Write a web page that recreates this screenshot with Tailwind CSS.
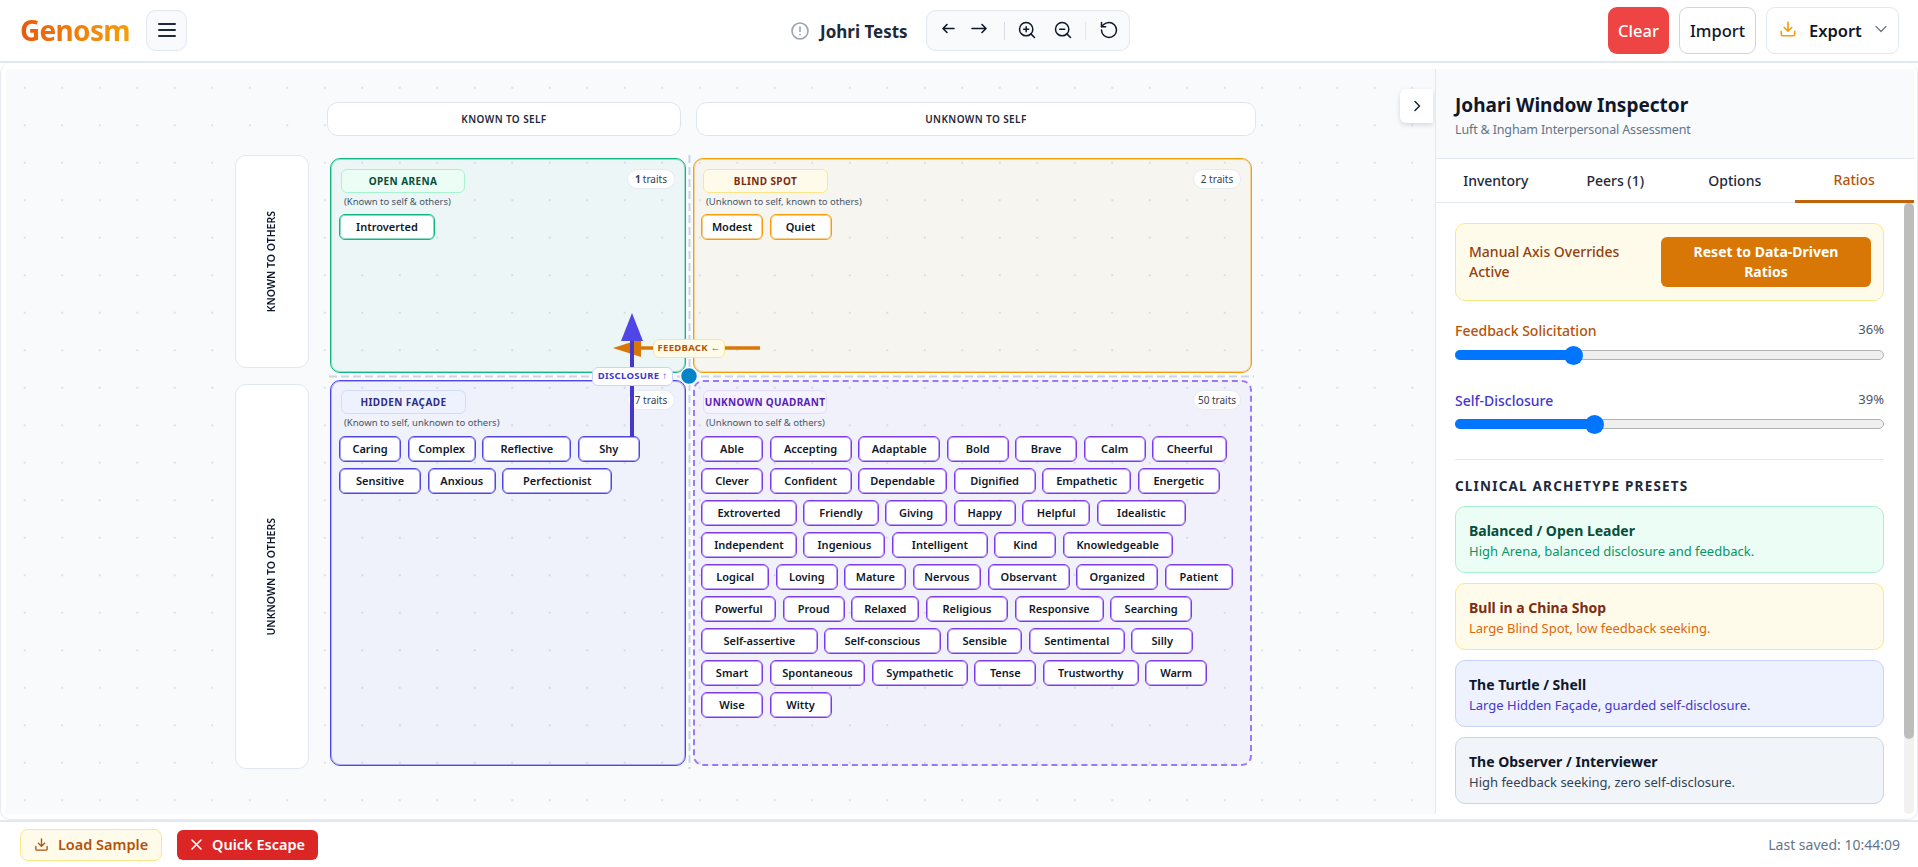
<!DOCTYPE html>
<html lang="en">
<head>
  <meta charset="UTF-8" />
  <meta name="viewport" content="width=device-width, initial-scale=1" />
  <title>Genosm - Johari Window</title>
  <script src="https://cdn.jsdelivr.net/npm/@tailwindcss/browser@4"></script>
</head>
<body class="bg-white font-['Noto_Sans',sans-serif] text-[#0f172a] h-[867px] w-[1918px] overflow-hidden flex flex-col">
  <!-- Header -->
  <header class="h-[63px] shrink-0 border-b-2 border-[#e2e8f0] flex items-center relative">
    <div class="w-[800px] flex items-center pl-[20px] mb-[1px]">
      <span class="w-[126px] text-[28px] font-bold tracking-[-0.7px] leading-[34px] whitespace-nowrap"><span class="bg-linear-to-r from-[#ea580c] to-[#f59e0b] bg-clip-text text-transparent">Genosm</span></span>
      <button class="w-[41px] h-[41px] rounded-[10px] bg-[#f8fafc] border border-[#e2e8f0] flex items-center justify-center">
        <svg width="20" height="20" viewBox="0 0 20 20" fill="none" stroke="#1e293b" stroke-width="2" stroke-linecap="round"><path d="M2 4h16M2 10h16M2 16h16"/></svg>
      </button>
    </div>
    <div class="absolute left-[791px] top-[10px] flex items-center h-[41px]">
      <svg width="18" height="18" viewBox="0 0 18 18" fill="none" stroke="#9ca3af" stroke-width="1.6" stroke-linecap="round"><circle cx="9" cy="9" r="8"/><path d="M9 5v4.5M9 12.6v.2"/></svg>
      <span class="ml-[11px] w-[95px] pt-[2px] text-[17px] font-bold text-[#1e293b] whitespace-nowrap">Johri Tests</span>
      <div class="ml-[11px] w-[204px] h-[41px] rounded-[10px] bg-[#f8fafc] border border-[#e2e8f0] flex items-center text-[#0f172a] relative">
        <svg class="ml-[14px] mb-[4px]" width="14" height="14" viewBox="0 0 14 14" fill="none" stroke="currentColor" stroke-width="1.6" stroke-linecap="round" stroke-linejoin="round"><path d="M13 6.5H2M6 2.5l-4 4 4 4"/></svg>
        <svg class="ml-[16px] mb-[4px]" width="16" height="14" viewBox="0 0 16 14" fill="none" stroke="currentColor" stroke-width="1.6" stroke-linecap="round" stroke-linejoin="round"><path d="M1 6.5h14M11 2.5l4 4-4 4"/></svg>
        <span class="ml-[17px] w-px h-[18px] bg-[#d8dee6]"></span>
        <svg class="ml-[12px] mb-[2px]" width="20" height="20" viewBox="0 0 24 24" fill="none" stroke="currentColor" stroke-width="1.8" stroke-linecap="round"><circle cx="11" cy="11" r="8"/><path d="M21 21l-4.35-4.35M11 8v6M8 11h6"/></svg>
        <svg class="ml-[16px] mb-[2px]" width="20" height="20" viewBox="0 0 24 24" fill="none" stroke="currentColor" stroke-width="1.8" stroke-linecap="round"><circle cx="11" cy="11" r="8"/><path d="M21 21l-4.35-4.35M8 11h6"/></svg>
        <span class="ml-[12px] w-px h-[18px] bg-[#e2e8f0]"></span>
        <svg class="ml-[13px] mb-[2px]" width="20" height="20" viewBox="0 0 24 24" fill="none" stroke="currentColor" stroke-width="1.8" stroke-linecap="round" stroke-linejoin="round"><path d="M3 12a9 9 0 1 0 9-9 9.75 9.75 0 0 0-6.74 2.74L3 8"/><path d="M3 3v5h5"/></svg>
      </div>
    </div>
    <div class="ml-auto mr-[19px] flex items-center gap-[10px] mb-[1px]">
      <button class="w-[61px] h-[47px] pt-[3px] rounded-[9px] bg-[#ef4444] text-white text-[16.5px] font-medium">Clear</button>
      <button class="w-[77px] h-[47px] pt-[3px] rounded-[9px] bg-white border border-[#d1d5db] text-[16.5px] font-medium">Import</button>
      <button class="w-[133px] h-[47px] rounded-[9px] bg-white border border-[#e2e8f0] text-[16.5px] font-semibold flex items-center pl-[12px]">
        <svg class="mb-[3px]" width="18" height="18" viewBox="0 0 24 24" fill="none" stroke="#f59e0b" stroke-width="2.2" stroke-linecap="round" stroke-linejoin="round"><path d="M21 15v4a2 2 0 0 1-2 2H5a2 2 0 0 1-2-2v-4M7 10l5 5 5-5M12 15V3"/></svg>
        <span class="ml-[12px] pt-[3px]">Export</span>
        <svg class="ml-[12px] mb-[3px]" width="14" height="14" viewBox="0 0 14 14" fill="none" stroke="#6b7280" stroke-width="1.2" stroke-linecap="round" stroke-linejoin="round"><path d="M2 4.5l5 5 5-5"/></svg>
      </button>
    </div>
  </header>

  <!-- Workspace -->
  <main class="h-[757px] shrink-0 rounded-[10px] border border-t-0 border-[#e8ecf2] pl-[5px] pr-[3px] pt-[6px] pb-[5px] flex overflow-hidden">
    <section class="relative w-[1429px] shrink-0 overflow-hidden bg-[#f8fafc] bg-[radial-gradient(#dbe2ea_1px,transparent_1.2px)] bg-[size:37.5px_37.5px] pt-[33px] pl-[229px]">
      <!-- Column headers -->
      <div class="flex pl-[92px] gap-[15px]">
        <div class="w-[354px] h-[34px] rounded-[11px] bg-white border border-[#dfe5ee] flex items-center justify-center text-[10px] font-semibold tracking-[0.4px] text-[#1e293b]">KNOWN TO SELF</div>
        <div class="w-[560px] h-[34px] rounded-[11px] bg-white border border-[#dfe5ee] flex items-center justify-center text-[10px] font-semibold tracking-[0.4px] text-[#1e293b]">UNKNOWN TO SELF</div>
      </div>

      <div class="flex mt-[19px]">
        <!-- Row headers -->
        <div class="w-[74px] flex flex-col gap-[16px]">
          <div class="h-[213px] rounded-[11px] bg-white border border-[#e2e8f0] flex items-center justify-center"><span class="[writing-mode:vertical-rl] rotate-180 text-[10.5px] font-semibold text-[#0f172a]">KNOWN TO OTHERS</span></div>
          <div class="h-[385px] rounded-[11px] bg-white border border-[#e2e8f0] flex items-center justify-center"><span class="[writing-mode:vertical-rl] rotate-180 text-[10.5px] font-semibold text-[#0f172a]">UNKNOWN TO OTHERS</span></div>
        </div>

        <!-- Quadrants -->
        <div class="ml-[21px] mt-[3px] grid grid-cols-[356px_559px] grid-rows-[215px_386px] gap-[7px]">
          <div class="rounded-[10px] border border-[#10b981] shadow-[inset_0_0_0_1px_#10b98166] bg-[#10b981]/5 pt-[10px] px-[8px]">
            <div class="flex justify-between items-start">
              <span class="ml-[2px] w-[124px] h-[24px] rounded-[6px] bg-[#ecfdf5] border border-[#a7f3d0] text-[#064e3b] text-[10px] font-bold tracking-[0.4px] flex items-center justify-center">OPEN ARENA</span>
              <span class="mr-[2px] w-[48px] h-[20px] rounded-full bg-white border border-[#e6eaf1] text-[10px] text-[#334155] flex items-center justify-center"><b class="mr-[2px] font-bold">1</b>traits</span>
            </div>
            <p class="ml-[5px] h-[21px] leading-[18px] text-[9.5px] text-[#475569]">(Known to self &amp; others)</p>
            <div id="open" class="flex flex-wrap gap-x-[6.5px] gap-y-[6px]"></div>
          </div>
          <div class="rounded-[10px] border border-[#f59e0b] shadow-[inset_0_0_0_1px_#f59e0b66] bg-[#f59e0b]/5 pt-[10px] px-[7px]">
            <div class="flex justify-between items-start">
              <span class="ml-[2px] w-[125px] h-[24px] rounded-[6px] bg-[#fffbeb] border border-[#fde68a] text-[#7c2d12] text-[10px] font-bold tracking-[0.4px] flex items-center justify-center">BLIND SPOT</span>
              <span class="mr-[3px] w-[48px] h-[20px] rounded-full bg-white border border-[#e6eaf1] text-[10px] text-[#334155] flex items-center justify-center">2 traits</span>
            </div>
            <p class="ml-[5px] h-[21px] leading-[18px] text-[9.5px] text-[#475569]">(Unknown to self, known to others)</p>
            <div id="blind" class="flex flex-wrap gap-x-[6.5px] gap-y-[6px]"></div>
          </div>
          <div class="rounded-[10px] border border-[#4f46e5] shadow-[inset_0_0_0_1px_#4f46e566] bg-[#4f46e5]/5 pt-[9px] px-[8px]">
            <div class="flex justify-between items-start">
              <span class="ml-[2px] w-[125px] h-[24px] rounded-[6px] bg-[#eef2ff] border border-[#d5dcfb] text-[#312e81] text-[10px] font-bold tracking-[0.4px] flex items-center justify-center">HIDDEN FAÇADE</span>
              <span class="mr-[2px] w-[48px] h-[20px] rounded-full bg-white border border-[#e6eaf1] text-[10px] text-[#334155] flex items-center justify-center">7 traits</span>
            </div>
            <p class="ml-[5px] h-[22px] leading-[18px] text-[9.5px] text-[#475569]">(Known to self, unknown to others)</p>
            <div id="hidden" class="flex flex-wrap gap-x-[6.5px] gap-y-[6px]"></div>
          </div>
          <div class="rounded-[10px] border-2 border-dashed border-[#9c78f8] bg-[#5b46e5]/5 pt-[8px] px-[6px]">
            <div class="flex justify-between items-start">
              <span class="ml-[2px] w-[124px] h-[24px] rounded-[6px] bg-[#f5f3ff] border border-[#e4dcfd] text-[#5b21b6] text-[10px] font-bold tracking-[0.3px] whitespace-nowrap flex items-center justify-center">UNKNOWN QUADRANT</span>
              <span class="mr-[3px] w-[48px] h-[20px] rounded-full bg-white border border-[#e6eaf1] text-[10px] text-[#334155] flex items-center justify-center">50 traits</span>
            </div>
            <p class="ml-[5px] h-[22px] leading-[18px] text-[9.5px] text-[#475569]">(Unknown to self &amp; others)</p>
            <div id="unknown" class="flex flex-wrap gap-x-[6.5px] gap-y-[6px]"></div>
          </div>
        </div>
      </div>

      <!-- Axis overlay, drawn in page coordinates -->
      <svg class="absolute left-[-6px] top-[-69px] pointer-events-none" width="1918" height="867" viewBox="0 0 1918 867" fill="none">
        <path d="M329 376.5H1254" stroke="#cbd5e1" stroke-width="2" stroke-dasharray="8 4"/>
        <path d="M689.5 155V769" stroke="#cbd5e1" stroke-width="2" stroke-dasharray="8 4"/>
        <path d="M641 348H760" stroke="#d97706" stroke-width="3.5"/>
        <path d="M613 348L641 339V357Z" fill="#d97706"/>
        <path d="M632 340V437" stroke="#4338ca" stroke-width="4"/>
        <path d="M632 313L643 341H621Z" fill="#4f46e5"/>
        <circle cx="689" cy="376" r="8.5" fill="#0284c7" stroke="#f8fafc" stroke-width="1.5"/>
      </svg>
      <span class="absolute left-[647px] top-[270px] w-[72px] h-[19px] rounded-[6px] bg-[#fffbeb] border-[1.5px] border-[#fde68a] text-[#b45309] text-[9.5px] font-bold tracking-[0.3px] whitespace-nowrap flex items-center justify-center">FEEDBACK ←</span>
      <span class="absolute left-[586px] top-[298px] w-[81px] h-[19px] rounded-[6px] bg-white border-[1.5px] border-[#c7d2fe] text-[#4338ca] text-[9.5px] font-bold tracking-[0.3px] whitespace-nowrap flex items-center justify-center">DISCLOSURE ↑</span>

      <button class="absolute left-[1394px] top-[20px] w-[33px] h-[34px] bg-white rounded-l-[6px] shadow-[0_2px_5px_rgba(15,23,42,0.15)] flex items-center justify-center">
        <svg width="12" height="12" viewBox="0 0 12 12" fill="none" stroke="#1e293b" stroke-width="1.6" stroke-linecap="round" stroke-linejoin="round"><path d="M4 1.5L8.5 6 4 10.5"/></svg>
      </button>
    </section>

    <!-- Inspector -->
    <aside class="w-[479px] shrink-0 border-l border-[#e2e8f0] bg-white flex flex-col overflow-hidden">
      <div class="h-[90px] shrink-0 bg-[#f8fafc] border-b border-[#e2e8f0] pl-[19px] pt-[22px]">
        <h1 class="text-[19px] font-bold leading-[28px] text-[#0f172a]">Johari Window Inspector</h1>
        <p class="text-[12.5px] tracking-[-0.15px] leading-[20px] mt-[1px] text-[#64748b]">Luft &amp; Ingham Interpersonal Assessment</p>
      </div>
      <nav class="h-[44px] shrink-0 border-b border-[#e2e8f0] flex text-[14px] font-medium text-[#1e293b]">
        <a class="flex-1 flex items-center justify-center">Inventory</a>
        <a class="flex-1 flex items-center justify-center">Peers (1)</a>
        <a class="flex-1 flex items-center justify-center">Options</a>
        <a class="flex-1 flex items-center justify-center text-[#b45309] border-b-[3px] border-[#c2620a] h-[44px]">Ratios</a>
      </nav>
      <div class="flex-1 flex min-h-0">
        <div class="flex-1 min-w-0 overflow-hidden pl-[19px] pr-[20px] pt-[20px]">
          <div class="h-[78px] rounded-[10px] bg-[#fffbeb] border border-[#fde68a] flex items-center pl-[13px] pr-[12px] justify-between">
            <p class="w-[170px] text-[14px] leading-[20px] font-medium text-[#92400e]">Manual Axis Overrides Active</p>
            <button class="w-[210px] h-[50px] rounded-[6px] bg-[#d97706] text-white text-[14px] leading-[20px] font-bold">Reset to Data-Driven<br>Ratios</button>
          </div>

          <div class="mt-[18px] flex justify-between items-center h-[22px]">
            <span class="text-[14px] font-medium text-[#b45309]">Feedback Solicitation</span>
            <span class="text-[13px] text-[#475569]">36%</span>
          </div>
          <div class="relative mt-[4px] h-[20px] flex items-center">
            <div class="w-full h-[10px] rounded-full bg-[#efefef] border border-[#b2b2b2]"></div>
            <div class="absolute left-0 h-[10px] w-[118px] rounded-l-full bg-[#0075ff]"></div>
            <div class="absolute left-[109px] w-[19px] h-[19px] rounded-full bg-[#0075ff]"></div>
          </div>

          <div class="mt-[24px] flex justify-between items-center h-[22px]">
            <span class="text-[14px] font-medium text-[#4338ca]">Self-Disclosure</span>
            <span class="text-[13px] text-[#475569]">39%</span>
          </div>
          <div class="relative mt-[3px] h-[20px] flex items-center">
            <div class="w-full h-[10px] rounded-full bg-[#efefef] border border-[#b2b2b2]"></div>
            <div class="absolute left-0 h-[10px] w-[140px] rounded-l-full bg-[#0075ff]"></div>
            <div class="absolute left-[130px] w-[19px] h-[19px] rounded-full bg-[#0075ff]"></div>
          </div>

          <div class="mt-[25px] border-t border-[#e2e8f0]"></div>
          <h3 class="mt-[16px] text-[13.5px] leading-[20px] font-bold tracking-[1.2px] whitespace-nowrap text-[#1e293b]">CLINICAL ARCHETYPE PRESETS</h3>

          <div class="mt-[10px] flex flex-col gap-[10px]">
            <div class="h-[67px] shrink-0 rounded-[10px] bg-[#ecfdf5] border border-[#a7f3d0] pl-[13px] pt-[14px]">
              <p class="text-[14px] leading-[20px] font-bold text-[#064e3b]">Balanced / Open Leader</p>
              <p class="text-[13px] leading-[20px] text-[#059669]">High Arena, balanced disclosure and feedback.</p>
            </div>
            <div class="h-[67px] shrink-0 rounded-[10px] bg-[#fffbeb] border border-[#fde68a] pl-[13px] pt-[14px]">
              <p class="text-[14px] leading-[20px] font-bold text-[#7c2d12]">Bull in a China Shop</p>
              <p class="text-[13px] leading-[20px] text-[#e0660a]">Large Blind Spot, low feedback seeking.</p>
            </div>
            <div class="h-[67px] shrink-0 rounded-[10px] bg-[#eef2ff] border border-[#c7d2fe] pl-[13px] pt-[14px]">
              <p class="text-[14px] leading-[20px] font-bold text-[#0f172a]">The Turtle / Shell</p>
              <p class="text-[13px] leading-[20px] text-[#4338ca]">Large Hidden Façade, guarded self-disclosure.</p>
            </div>
            <div class="h-[67px] shrink-0 rounded-[10px] bg-[#f1f5f9] border border-[#cbd5e1] pl-[13px] pt-[14px]">
              <p class="text-[14px] leading-[20px] font-bold text-[#0f172a]">The Observer / Interviewer</p>
              <p class="text-[13px] leading-[20px] text-[#334155]">High feedback seeking, zero self-disclosure.</p>
            </div>
            <div class="h-[67px] shrink-0 rounded-[10px] bg-[#faf5ff] border border-[#e9d5ff]"></div>
          </div>
        </div>
        <!-- Scrollbar -->
        <div class="w-[10px] shrink-0 bg-[#f1f1f1] rounded-b-[5px]">
          <div class="h-[536px] bg-[#bdbdbd] rounded-full"></div>
        </div>
      </div>
    </aside>
  </main>

  <!-- Footer -->
  <footer class="flex-1 border-t-2 border-[#e2e8f0] flex items-center pl-[20px] pr-[18px]">
    <button class="w-[142px] h-[32px] rounded-[8px] bg-[#fffbeb] border border-[#fde68a] text-[#b45309] text-[14.5px] font-semibold flex items-center justify-center gap-[9px]">
      <svg width="15" height="15" viewBox="0 0 24 24" fill="none" stroke="currentColor" stroke-width="2.2" stroke-linecap="round" stroke-linejoin="round"><path d="M21 15v4a2 2 0 0 1-2 2H5a2 2 0 0 1-2-2v-4M7 10l5 5 5-5M12 15V3"/></svg>
      Load Sample
    </button>
    <button class="ml-[15px] w-[141px] h-[30px] rounded-[6px] bg-[#dc2626] text-white text-[14.5px] font-semibold flex items-center justify-center gap-[9px]">
      <svg width="13" height="13" viewBox="0 0 13 13" fill="none" stroke="currentColor" stroke-width="1.6" stroke-linecap="round"><path d="M2 2l9 9M11 2l-9 9"/></svg>
      Quick Escape
    </button>
    <span class="ml-auto text-[14px] text-[#64748b]">Last saved: 10:44:09</span>
  </footer>

  <script>
    const chipBase = "h-[26px] rounded-[6px] bg-white border flex items-center justify-center text-[11px] font-semibold text-[#0f172a] whitespace-nowrap";
    const quadrants = {
      open: { border: "border-[#10b981] shadow-[inset_0_0_0_1px_#10b98180]", traits: ["Introverted"] },
      blind: { border: "border-[#f59e0b] shadow-[inset_0_0_0_1px_#f59e0b80]", traits: ["Modest", "Quiet"] },
      hidden: { border: "border-[#4f46e5] shadow-[inset_0_0_0_1px_#4f46e580]", traits: ["Caring", "Complex", "Reflective", "Shy", "Sensitive", "Anxious", "Perfectionist"] },
      unknown: {
        border: "border-[#7c3aed] shadow-[inset_0_0_0_1px_#7c3aed80]",
        traits: ["Able", "Accepting", "Adaptable", "Bold", "Brave", "Calm", "Cheerful", "Clever", "Confident", "Dependable", "Dignified", "Empathetic", "Energetic", "Extroverted", "Friendly", "Giving", "Happy", "Helpful", "Idealistic", "Independent", "Ingenious", "Intelligent", "Kind", "Knowledgeable", "Logical", "Loving", "Mature", "Nervous", "Observant", "Organized", "Patient", "Powerful", "Proud", "Relaxed", "Religious", "Responsive", "Searching", "Self-assertive", "Self-conscious", "Sensible", "Sentimental", "Silly", "Smart", "Spontaneous", "Sympathetic", "Tense", "Trustworthy", "Warm", "Wise", "Witty"]
      }
    };
    // Chip width follows the trait's character count
    for (const [id, q] of Object.entries(quadrants)) {
      document.getElementById(id).innerHTML = q.traits.map(t => {
        const width = Math.max(62, 20 + 6.9 * t.length);
        return `<span class="${chipBase} ${q.border}" style="width:${width}px">${t}</span>`;
      }).join("");
    }
  </script>
</body>
</html>
